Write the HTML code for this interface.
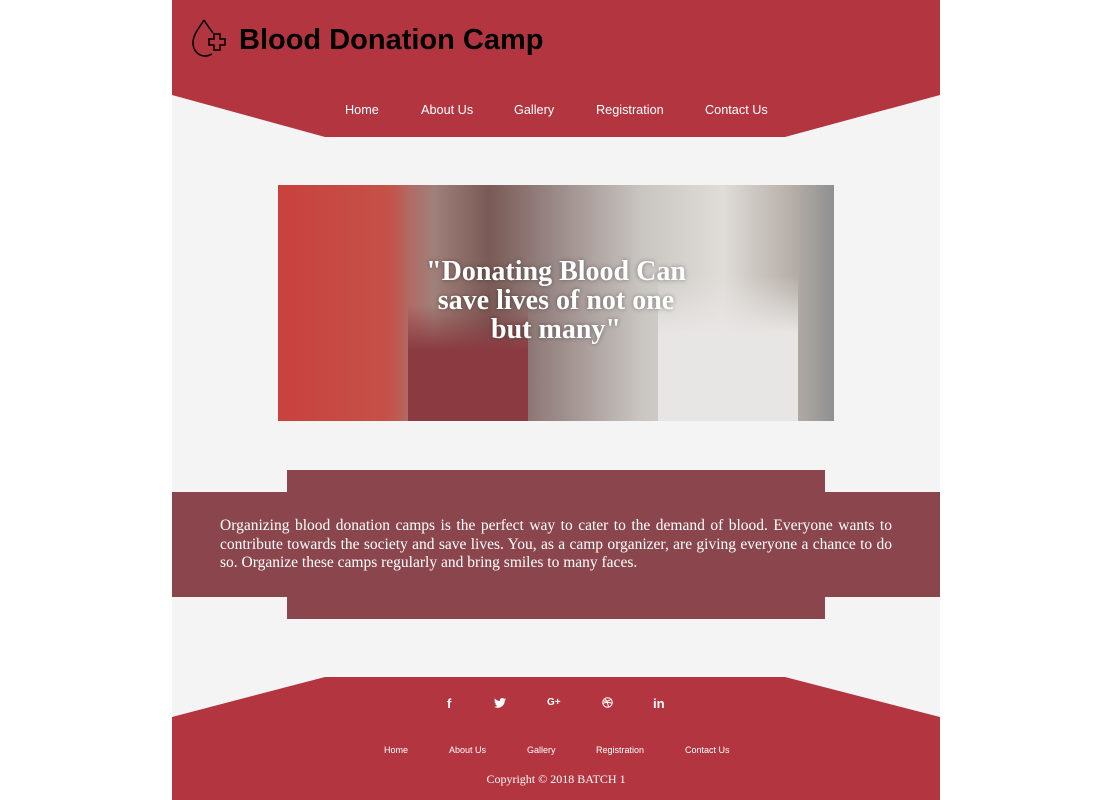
<!DOCTYPE html>
<html><head><style>
body{margin:0;background:#fff;font-family:"Liberation Sans",sans-serif;}
.page{position:absolute;left:172px;top:0;width:768px;height:800px;background:#f4f4f4;overflow:hidden;}
.hdr{position:absolute;left:0;top:0;width:768px;height:137px;background:#b3353f;clip-path:polygon(0 0,768px 0,768px 95px,613px 137px,153px 137px,0 95px);}
.title{position:absolute;left:67px;top:24px;font-size:29px;font-weight:bold;color:#000;}
.nav{position:absolute;top:103px;font-size:12.7px;color:#fff;}
.img{position:absolute;left:106px;top:185px;width:556px;height:236px;overflow:hidden;
background:linear-gradient(90deg,#c84a45 0%,#c6504a 18%,#a0807a 28%,#7a5a55 38%,#9a8a88 50%,#c8c4c0 65%,#e0dcd8 80%,#b8b0aa 92%,#909090 100%);}
.quote{position:absolute;left:0;width:556px;top:72px;text-align:center;font-family:"Liberation Serif",serif;font-weight:bold;font-size:28px;line-height:29px;color:#fff;text-shadow:0 0 4px rgba(0,0,0,.4);}
.b1{position:absolute;left:115px;top:470px;width:538px;height:149px;background:#8b464d;}
.b2{position:absolute;left:0;top:492px;width:768px;height:105px;background:#8b464d;}
.txt{position:absolute;left:48px;top:517px;width:672px;font-family:"Liberation Serif",serif;font-size:15.5px;line-height:18.5px;color:#fff;text-align:justify;}
.ftr{position:absolute;left:0;top:677px;width:768px;height:123px;background:#b3353f;clip-path:polygon(153px 0,613px 0,768px 40px,768px 123px,0 123px,0 40px);}
.ic{position:absolute;top:696px;color:#fff;font-size:13px;font-weight:bold;}
.fn{position:absolute;top:745px;font-size:9px;color:#fff;}
.copy{position:absolute;top:772px;left:0;width:768px;text-align:center;font-family:"Liberation Serif",serif;font-size:12px;color:#fff;}
</style></head><body>
<div class="page">
<div class="hdr"></div>
<svg style="position:absolute;left:18px;top:18px" width="40" height="40" viewBox="0 0 40 40" fill="none" stroke="#000" stroke-width="1.6">
<path d="M14 2 C10 9 3 16 3 25 C3 32 8 38 15 38 C18 38 20 37 22 36"/>
<path d="M14 2 C17 7 20 11 23 15"/>
<path d="M19 21 h5 v-5 h6 v5 h5 v6 h-5 v5 h-6 v-5 h-5 z"/>
</svg>
<div class="title">Blood Donation Camp</div>
<div class="nav" style="left:173px">Home</div>
<div class="nav" style="left:249px">About Us</div>
<div class="nav" style="left:342px">Gallery</div>
<div class="nav" style="left:424px">Registration</div>
<div class="nav" style="left:533px">Contact Us</div>
<div class="img">
<div style="position:absolute;left:0;top:0;width:130px;height:236px;background:linear-gradient(90deg,#c8413f,#c65048 80%,rgba(198,80,72,0))"></div>
<div style="position:absolute;left:130px;top:120px;width:120px;height:116px;background:linear-gradient(180deg,rgba(138,58,64,0),#8a3a40 40%)"></div>
<div style="position:absolute;left:380px;top:90px;width:140px;height:146px;background:linear-gradient(180deg,rgba(232,230,228,0),#e8e6e4 40%)"></div>
<div class="quote">"Donating Blood Can<br>save lives of not one<br>but many"</div>
</div>
<div class="b1"></div><div class="b2"></div>
<div class="txt">Organizing blood donation camps is the perfect way to cater to the demand of blood. Everyone wants to contribute towards the society and save lives. You, as a camp organizer, are giving everyone a chance to do so. Organize these camps regularly and bring smiles to many faces.</div>
<div class="ftr"></div>
<div class="ic" style="left:275px">f</div>
<svg style="position:absolute;left:322px;top:698px" width="12" height="10" viewBox="0 0 24 20"><path fill="#fff" d="M24 2.4c-.9.4-1.8.7-2.8.8 1-.6 1.8-1.6 2.2-2.7-1 .6-2 1-3.1 1.2C19.3.7 18 0 16.6 0c-2.7 0-4.9 2.2-4.9 4.9 0 .4 0 .8.1 1.1C7.7 5.8 4.1 3.9 1.7.9c-.4.7-.7 1.6-.7 2.5 0 1.7.9 3.2 2.2 4.1-.8 0-1.6-.2-2.2-.6v.1c0 2.4 1.7 4.4 3.9 4.8-.4.1-.8.2-1.3.2-.3 0-.6 0-.9-.1.6 2 2.4 3.4 4.6 3.4-1.7 1.3-3.8 2.1-6.1 2.1-.4 0-.8 0-1.2-.1C2.2 18.8 4.8 19.6 7.5 19.6c9.1 0 14-7.5 14-14v-.6c1-.7 1.8-1.6 2.5-2.6z"/></svg>
<div class="ic" style="left:375px;font-size:10px;top:697px">G+</div>
<svg style="position:absolute;left:430px;top:697px" width="11" height="11" viewBox="0 0 22 22" fill="none" stroke="#fff" stroke-width="2"><circle cx="11" cy="11" r="9.5"/><path d="M3 8c6 1 12-1 16-4M6 3c4 5 6 11 7 17M2 13c5-3 12-3 19 0"/></svg>
<div class="ic" style="left:481px">in</div>
<div class="fn" style="left:212px">Home</div>
<div class="fn" style="left:277px">About Us</div>
<div class="fn" style="left:355px">Gallery</div>
<div class="fn" style="left:424px">Registration</div>
<div class="fn" style="left:513px">Contact Us</div>
<div class="copy">Copyright © 2018 BATCH 1</div>
</div>
</body></html>
